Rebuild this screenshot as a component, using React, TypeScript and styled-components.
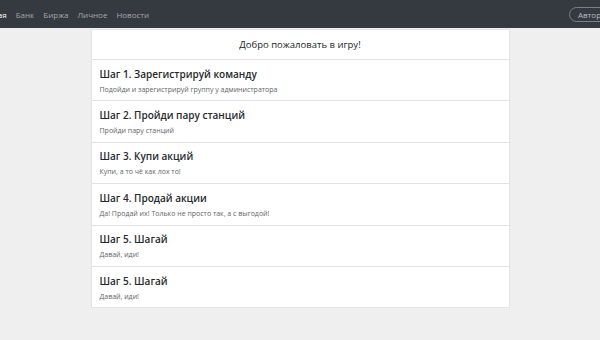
import { createGlobalStyle, styled } from 'styled-components';

const steps = [
 { title: 'Шаг 1. Зарегистрируй команду', text: 'Подойди и зарегистрируй группу у администратора' },
 { title: 'Шаг 2. Пройди пару станций', text: 'Пройди пару станций' },
 { title: 'Шаг 3. Купи акций', text: 'Купи, а то чё как лох то!' },
 { title: 'Шаг 4. Продай акции', text: 'Да! Продай их! Только не просто так, а с выгодой!' },
 { title: 'Шаг 5. Шагай', text: 'Давай, иди!' },
 { title: 'Шаг 5. Шагай', text: 'Давай, иди!' },
];

const links = ['Главная', 'Банк', 'Биржа', 'Личное', 'Новости'];

export default function App() {
 return (
  <>
   <GlobalStyle />
   <Navbar>
    <NavList>
     {links.map((link, i) => (
      <NavLink key={link} $active={i === 0}>
       {link}
      </NavLink>
     ))}
    </NavList>
    <LoginButton>Авторизация</LoginButton>
   </Navbar>

   <Main>
    <Card>
     <CardHeader>Добро пожаловать в игру!</CardHeader>
     {steps.map((step, i) => (
      <StepItem key={i}>
       <StepTitle>{step.title}</StepTitle>
       <StepText>{step.text}</StepText>
      </StepItem>
     ))}
    </Card>
   </Main>
  </>
 );
}

const GlobalStyle = createGlobalStyle`
 html, body {
  margin: 0;
  padding: 0;
  background: #efefef;
  overflow: hidden;
  font-family: "Open Sans", "Liberation Sans", sans-serif;
  color: #212529;
 }
`;

// шапка немного шире окна, как на скриншоте
const Navbar = styled.nav`
 display: flex;
 align-items: center;
 justify-content: space-between;
 height: 28px;
 background: #343a40;
 margin-left: -25px;
 margin-right: -46px;
 padding: 0 8px 0 0;
`;

const NavList = styled.div`
 display: flex;
 align-items: center;
 gap: 9px;
`;

const NavLink = styled.span<{ $active?: boolean }>`
 font-size: 8px;
 color: ${(p) => (p.$active ? '#ffffff' : 'rgba(255, 255, 255, 0.55)')};
`;

const LoginButton = styled.button`
 height: 15px;
 padding: 0 8px;
 border: 1px solid #7c8086;
 border-radius: 8px;
 background: transparent;
 color: #b9bcc0;
 font-family: inherit;
 font-size: 8px;
 line-height: 13px;
`;

const Main = styled.main`
 display: flex;
 justify-content: center;
 padding-top: 1px;
`;

const Card = styled.div`
 width: 417px;
 background: #ffffff;
 border: 1px solid #e4e4e4;
`;

const CardHeader = styled.div`
 height: 29px;
 display: flex;
 align-items: center;
 justify-content: center;
 font-size: 9.5px;
 border-bottom: 1px solid #e2e2e2;
`;

const StepItem = styled.div`
 height: 40.4px;
 padding: 0 8px;
 display: flex;
 flex-direction: column;
 justify-content: center;
 gap: 4px;
 border-bottom: 1px solid #e2e2e2;

 &:last-child {
  border-bottom: none;
 }
`;

const StepTitle = styled.div`
 font-size: 10px;
 font-weight: 600;
 color: #25292d;
`;

const StepText = styled.div`
 font-size: 7px;
 color: #606468;
`;
